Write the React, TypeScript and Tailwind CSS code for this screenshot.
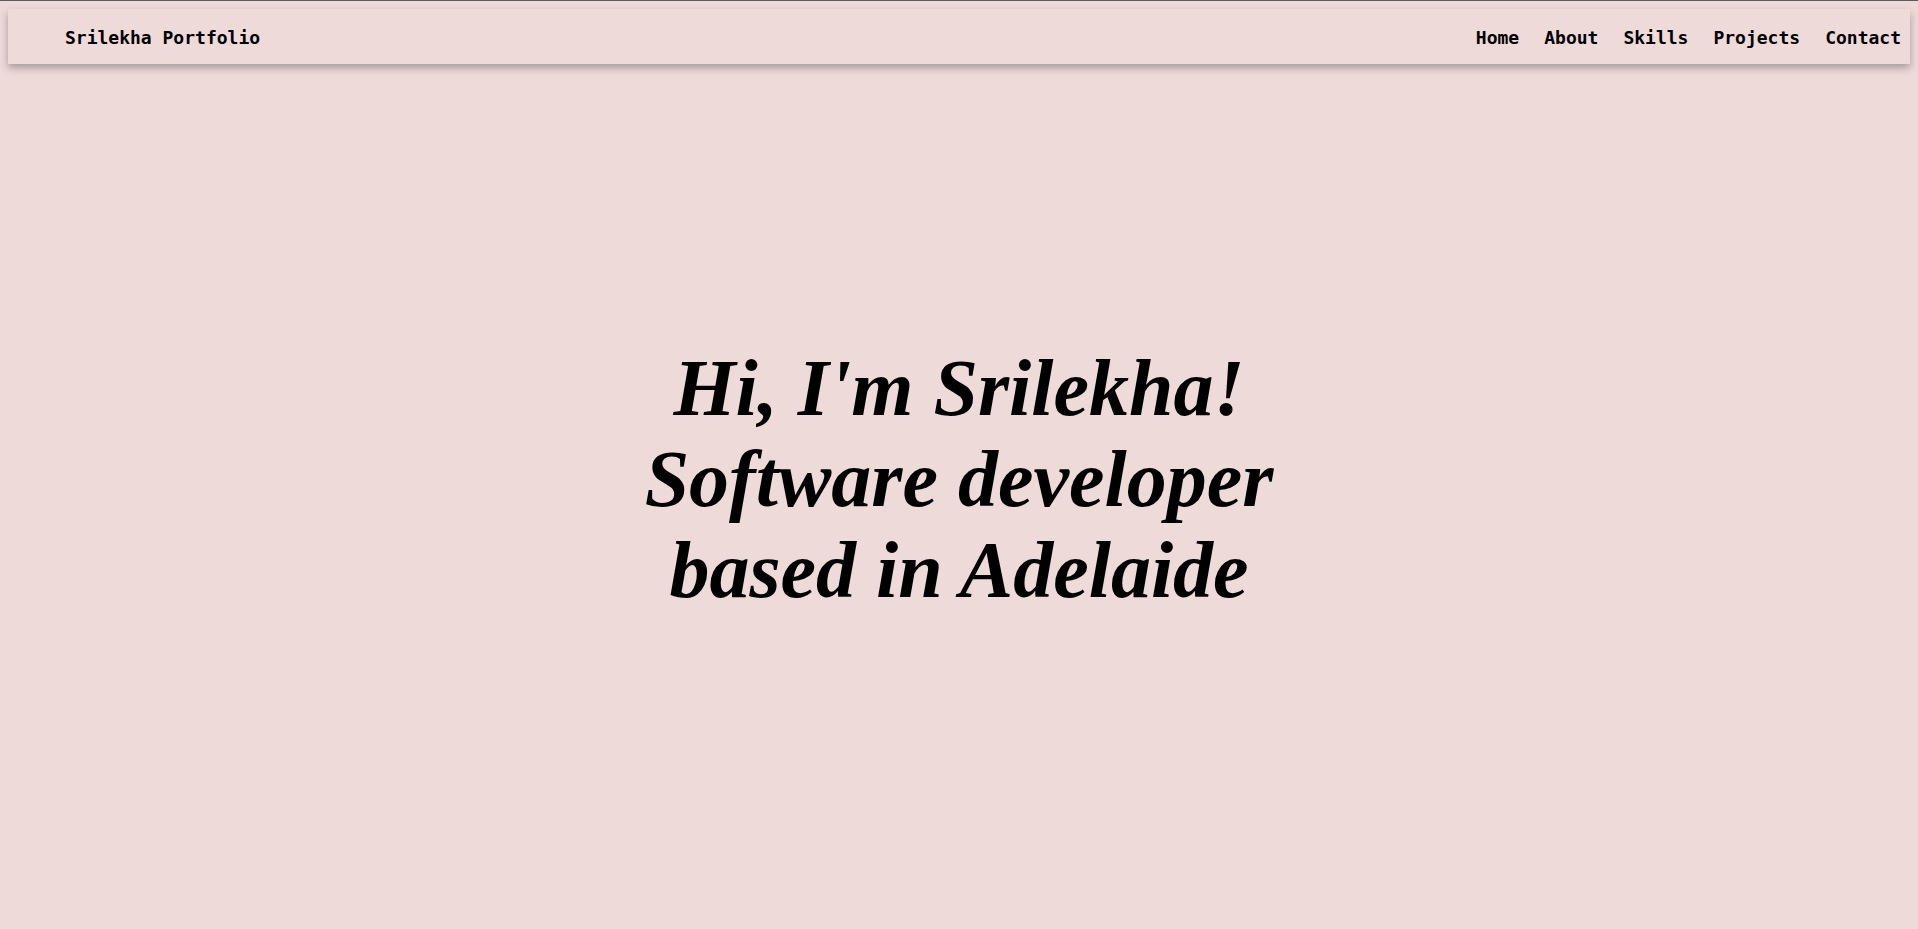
export default function App() {
  const links = ["Home", "About", "Skills", "Projects", "Contact"];

  return (
    <div className="min-h-screen bg-[#efdada] border-t border-[#5c5c5c] px-2 pt-2">
      {/* Navbar */}
      <header className="h-[55px] flex items-center justify-between pt-[2px] pl-[57px] pr-[9px] bg-[#efdada] shadow-[0_4px_8px_rgba(0,0,0,0.3)] font-['DejaVu_Sans_Mono',monospace] font-bold text-[18px] text-black">
        <span>Srilekha Portfolio</span>
        <nav className="flex gap-[25px]">
          {links.map((l) => (
            <a key={l} href={`#${l.toLowerCase()}`}>
              {l}
            </a>
          ))}
        </nav>
      </header>

      {/* Hero */}
      <section className="pt-[279px] text-center">
        <h1 className="font-['Liberation_Serif',serif] italic font-bold text-[80px] leading-[91px] text-black">
          Hi, I'm Srilekha!
          <br />
          Software developer
          <br />
          based in Adelaide
        </h1>
      </section>
    </div>
  );
}
